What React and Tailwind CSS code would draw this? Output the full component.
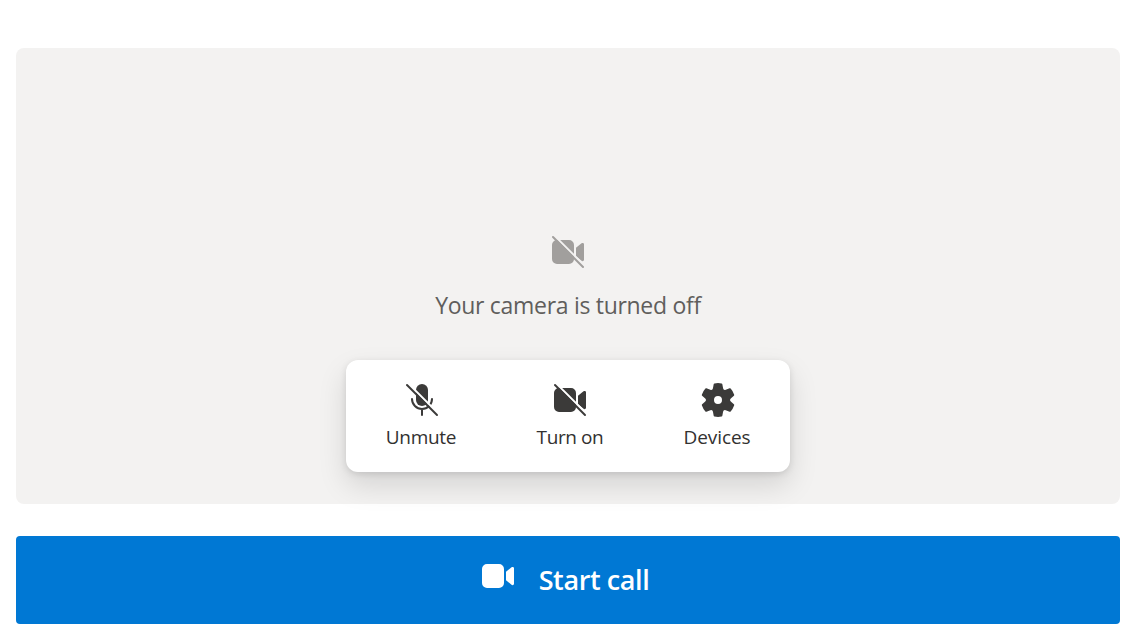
const VIDEO_PATH =
  'M13 6.5A2.5 2.5 0 0 0 10.5 4h-6A2.5 2.5 0 0 0 2 6.5v7A2.5 2.5 0 0 0 4.5 16h6a2.5 2.5 0 0 0 2.5-2.5v-7Zm1 1.43v4.15l2.76 2.35a.75.75 0 0 0 1.24-.57V6.2a.75.75 0 0 0-1.24-.57L14 7.93Z';

function Icon({ className = '', children }) {
  return (
    <svg viewBox="0 0 20 20" className={`size-10 shrink-0 ${className}`} fill="currentColor" aria-hidden="true">
      {children}
    </svg>
  );
}

function VideoIcon() {
  return (
    <Icon>
      <path d={VIDEO_PATH} />
    </Icon>
  );
}

// Draws a glyph crossed by a diagonal stroke, with a clear gap along its upper side.
function Crossed({ id, className, children }) {
  return (
    <Icon className={className}>
      <mask id={id} maskUnits="userSpaceOnUse" x="0" y="0" width="20" height="20">
        <rect width="20" height="20" fill="white" />
        <path d="M2.5 1.1L18.9 17.5" stroke="black" strokeWidth="1" />
      </mask>
      <g mask={`url(#${id})`}>{children}</g>
      <path d="M2.5 2.5l15 15" stroke="currentColor" strokeWidth="1" strokeLinecap="round" />
    </Icon>
  );
}

function VideoOffIcon({ id, className }) {
  return (
    <Crossed id={id} className={className}>
      <path d={VIDEO_PATH} />
    </Crossed>
  );
}

function MicOffIcon() {
  return (
    <Crossed id="mic-off">
      <rect x="7" y="2" width="6" height="11" rx="3" />
      <path d="M5 9.5a5 5 0 0 0 10 0M10 14.5v3" fill="none" stroke="currentColor" strokeLinecap="round" />
    </Crossed>
  );
}

function SettingsIcon() {
  return (
    <Icon>
      <path d="M1.91 7.38A8.5 8.5 0 0 1 3.7 4.3a.5.5 0 0 1 .54-.13l1.92.68a1 1 0 0 0 1.32-.76l.36-2a.5.5 0 0 1 .4-.4 8.53 8.53 0 0 1 3.55 0c.2.04.35.2.38.4l.37 2a1 1 0 0 0 1.32.76l1.92-.68a.5.5 0 0 1 .54.13 8.5 8.5 0 0 1 1.78 3.08c.06.2 0 .4-.15.54l-1.56 1.32a1 1 0 0 0 0 1.52l1.56 1.32a.5.5 0 0 1 .15.54 8.5 8.5 0 0 1-1.78 3.08.5.5 0 0 1-.54.13l-1.92-.68a1 1 0 0 0-1.32.76l-.37 2a.5.5 0 0 1-.38.4 8.53 8.53 0 0 1-3.56 0 .5.5 0 0 1-.39-.4l-.36-2a1 1 0 0 0-1.32-.76l-1.92.68a.5.5 0 0 1-.54-.13 8.5 8.5 0 0 1-1.78-3.08.5.5 0 0 1 .15-.54l1.56-1.32a1 1 0 0 0 0-1.52L2.06 7.92a.5.5 0 0 1-.15-.54ZM8 10a2 2 0 1 0 4 0 2 2 0 0 0-4 0Z" />
    </Icon>
  );
}

function ControlButton({ icon, label, labelClass }) {
  return (
    <button type="button" className="flex h-full w-[148px] flex-col items-center pt-5 pl-[3px] text-[#3b3a39]">
      {icon}
      <span className={`mt-[3px] text-[19px] leading-7 whitespace-nowrap text-[#323130] ${labelClass}`}>{label}</span>
    </button>
  );
}

export default function App() {
  return (
    <main className="flex h-[640px] w-full flex-col gap-8 bg-white px-4 pt-12 pb-4 font-['Open_Sans','Noto_Sans',sans-serif]">
      <section className="flex h-[456px] flex-col items-center rounded-lg bg-[#f3f2f1] pt-[184px]">
        <VideoOffIcon id="preview-off" className="text-[#a19f9d]" />
        <p className="mt-[15px] mb-px text-[23px] leading-9 tracking-[-0.3px] whitespace-nowrap text-[#605e5c]">
          Your camera is turned off
        </p>
        <div className="mt-9 flex h-28 rounded-xl bg-white shadow-[0_13px_29px_rgba(0,0,0,0.13),0_2px_7px_rgba(0,0,0,0.11)]">
          <ControlButton icon={<MicOffIcon />} label="Unmute" labelClass="tracking-[-0.3px] pr-px" />
          <ControlButton icon={<VideoOffIcon id="camera-off" />} label="Turn on" labelClass="tracking-[-0.4px] pl-px" />
          <ControlButton icon={<SettingsIcon />} label="Devices" labelClass="tracking-[-0.1px] pr-px" />
        </div>
      </section>
      <button type="button" className="flex h-[88px] items-start justify-center rounded bg-[#0078d4] pt-5 pr-[9px] text-white">
        <VideoIcon />
        <span className="mt-1 ml-[21px] text-[27px] leading-10 font-semibold tracking-[-0.4px] whitespace-nowrap">Start call</span>
      </button>
    </main>
  );
}
